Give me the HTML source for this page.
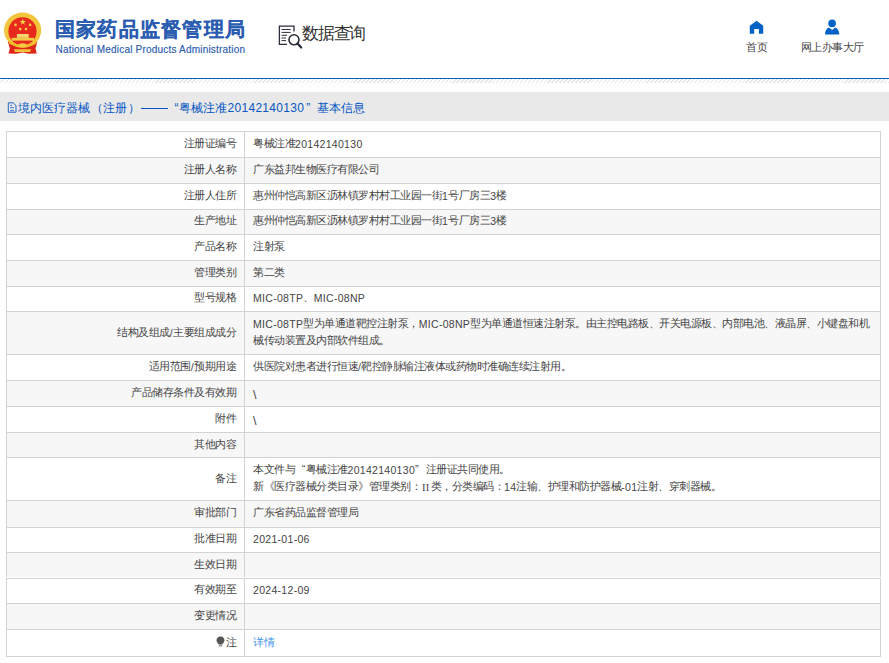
<!DOCTYPE html><html><head><meta charset="utf-8"><style>
*{margin:0;padding:0;box-sizing:border-box}
html,body{width:889px;height:663px;overflow:hidden;background:#fff;font-family:"Liberation Sans",sans-serif;color:#555}
.abs{position:absolute;white-space:nowrap}
#title{left:54.7px;top:14.5px;font-size:20px;font-weight:bold;color:#2a5cb0;line-height:28px;letter-spacing:1.3px;-webkit-text-stroke:0.12px #2a5cb0}
#en{left:55.5px;top:44.3px;font-size:10px;color:#2a5cb0;line-height:12px;letter-spacing:0.2px;-webkit-text-stroke:0.15px #2a5cb0}
#sq{left:302px;top:22px;font-size:17px;color:#333;line-height:24px;letter-spacing:-1.2px}
.nav{font-size:11px;color:#444;line-height:14px;letter-spacing:-0.5px}
#bline{left:0;top:78px;width:889px;height:1px;background:#0a5fc6}
#hatch{left:0;top:79px;width:889px;height:4px;background:repeating-linear-gradient(135deg,#fff 0,#fff 1.8px,#e4e4e4 1.8px,#e4e4e4 2.8px);background-position:2px 0}
#bar{left:0;top:92px;width:889px;height:29px;background:#e9e9e9}
.bt{top:100px;font-size:12px;color:#0656c4;line-height:16px}
.row{position:absolute;left:6px;width:875px;border:1px solid #d3d3d3;border-bottom:none}
.row.g{background:#f7f7f7}
.lab{position:absolute;left:0;width:238px;top:0;bottom:0;border-right:1px solid #d3d3d3;text-align:right;padding-right:8px;font-size:11px;letter-spacing:-0.5px;color:#444;display:flex;align-items:center;justify-content:flex-end}
.val{position:absolute;left:246px;top:0;bottom:0;font-size:11px;letter-spacing:-0.5px;color:#444;display:flex;align-items:center;line-height:17px}
.lab>div,.val>div{position:relative;top:-1px}
.l{font-size:10.5px;letter-spacing:0.3px;position:relative;top:1px}
.bs{position:relative;top:2px}.bs .l{font-size:12.5px}
.r2{display:inline-block;width:9.5px;font-family:'Liberation Serif',serif;font-size:11px;letter-spacing:-0.3px;text-align:center}
.val a{color:#3f92ea}
.q{display:inline-block;width:10.5px;letter-spacing:0}
</style></head><body>
<svg class="abs" style="left:0;top:0" width="50" height="60" viewBox="0 0 50 60">
<path d="M7.8 41.5 L37.4 41.5 L35.5 48.5 L36.7 53.5 L29 53.8 L22.6 52.5 L16 53.8 L8.5 53.5 L9.8 48.5 Z" fill="#e0261b"/>
<ellipse cx="22.65" cy="30.2" rx="18.6" ry="17.6" fill="#f3c53a"/>
<circle cx="22.5" cy="31.3" r="14.1" fill="#e8291d"/>
<polygon points="22.8,18.6 23.6,20.9 26,20.9 24.1,22.4 24.8,24.8 22.8,23.3 20.8,24.8 21.5,22.4 19.6,20.9 22,20.9" fill="#f6d34a"/>
<circle cx="15.5" cy="24.9" r="1.3" fill="#f3cc45"/><circle cx="30.1" cy="24.9" r="1.3" fill="#f3cc45"/>
<circle cx="20.2" cy="29.1" r="1.3" fill="#f3cc45"/><circle cx="26" cy="29.1" r="1.3" fill="#f3cc45"/>
<rect x="16.9" y="34" width="11.8" height="3.8" fill="#f6d870"/>
<rect x="11.7" y="37.8" width="22.3" height="2.8" fill="#f3cc45"/>
<path d="M8.5 40.5 Q22.6 49.5 36.7 40.5 L36.2 43.5 Q22.6 51 9 43.5 Z" fill="#f0bd2a"/>
<ellipse cx="22.6" cy="45.3" rx="4" ry="2" fill="#f3cc45"/>
<path d="M13.8 49.2 H31.2 L30 52 H15 Z" fill="#f3c53a"/>

</svg>
<div class="abs" id="title">国家药品监督管理局</div>
<div class="abs" id="en">National Medical Products Administration</div>
<svg class="abs" style="left:276px;top:22px" width="30" height="30" viewBox="276 22 30 30">
<path d="M294 31.5 V26.2 H279.4 V44.4 H287" fill="none" stroke="#2c2c3c" stroke-width="1.3"/>
<path d="M281.5 29.5 H290.7 M281.5 32.4 H290.7 M281.5 35.3 H287 M281.5 38 H286 M281.5 40.6 H286" stroke="#2c2c3c" stroke-width="1"/>
<circle cx="294" cy="39.8" r="5" fill="none" stroke="#2c2c3c" stroke-width="1.6"/>
<path d="M297.5 43.5 L301.2 47.5" stroke="#2c2c3c" stroke-width="2.2" stroke-linecap="round"/>
</svg>
<div class="abs" id="sq">数据查询</div>
<svg class="abs" style="left:740px;top:15px" width="30" height="25" viewBox="740 15 30 25">
<path d="M756.6 20.7 L763.2 25.7 V33.7 H758.9 V29 H754.2 V33.7 H749.8 V25.7 Z" fill="#0062c4"/></svg>
<div class="abs nav" style="left:746px;top:40px">首页</div>
<svg class="abs" style="left:815px;top:15px" width="30" height="25" viewBox="815 15 30 25">
<circle cx="832.1" cy="23.4" r="3.8" fill="#0062c4"/>
<path d="M825 34.4 Q825.5 28.5 829 27.6 L832.1 30 L835.2 27.6 Q838.8 28.5 839.3 34.4 Z" fill="#0062c4"/></svg>
<div class="abs nav" style="left:800.5px;top:40px">网上办事大厅</div>
<div class="abs" id="bline"></div><div class="abs" id="hatch"></div><div class="abs" id="bar"></div>
<div class="abs" style="left:141.2px;top:107.6px;width:26.5px;height:1.2px;background:#0656c4"></div>
<svg class="abs" style="left:5px;top:100px" width="14" height="15" viewBox="5 100 14 15">
<path d="M8.3 102.8 H13.2 L16 105.6 V112.2 H8.3 Z" fill="none" stroke="#1f63c6" stroke-width="1"/>
<path d="M10 105.4 H12 M10 107.7 H14 M10 110.4 H14" stroke="#2a6ad0" stroke-width="0.9"/></svg>
<div class="abs bt" style="left:18px">境内医疗器械</div>
<div class="abs bt" style="left:90.5px">（</div>
<div class="abs bt" style="left:102.5px">注册</div>
<div class="abs bt" style="left:128.2px">）</div>
<div class="abs bt" style="left:174.5px">“</div>
<div class="abs bt" style="left:179px">粤械注准</div>
<div class="abs bt" style="left:227.5px"><span style="letter-spacing:0.3px">20142140130</span></div>
<div class="abs bt" style="left:306.3px">”</div>
<div class="abs bt" style="left:316.5px">基本信息</div>
<div class="row" style="top:131px;height:26px"><div class="lab"><div>注册证编号</div></div><div class="val"><div>粤械注准<span class=l>20142140130</span></div></div></div>
<div class="row g" style="top:157px;height:26px"><div class="lab"><div>注册人名称</div></div><div class="val"><div>广东益邦生物医疗有限公司</div></div></div>
<div class="row" style="top:183px;height:25.5px"><div class="lab"><div>注册人住所</div></div><div class="val"><div>惠州仲恺高新区沥林镇罗村村工业园一街<span class=l>1</span>号厂房三<span class=l>3</span>楼</div></div></div>
<div class="row g" style="top:208.5px;height:25.5px"><div class="lab"><div>生产地址</div></div><div class="val"><div>惠州仲恺高新区沥林镇罗村村工业园一街<span class=l>1</span>号厂房三<span class=l>3</span>楼</div></div></div>
<div class="row" style="top:234px;height:26px"><div class="lab"><div>产品名称</div></div><div class="val"><div>注射泵</div></div></div>
<div class="row g" style="top:260px;height:25.5px"><div class="lab"><div>管理类别</div></div><div class="val"><div>第二类</div></div></div>
<div class="row" style="top:285.5px;height:25.5px"><div class="lab"><div>型号规格</div></div><div class="val"><div><span class=l>MIC-08TP</span>、<span class=l>MIC-08NP</span></div></div></div>
<div class="row g" style="top:311px;height:43.30000000000001px"><div class="lab"><div>结构及组成<span class=l>/</span>主要组成成分</div></div><div class="val"><div><span class=l>MIC-08TP</span>型为单通道靶控注射泵，<span class=l>MIC-08NP</span>型为单通道恒速注射泵。由主控电路板、开关电源板、内部电池、液晶屏、小键盘和机<br>械传动装置及内部软件组成。</div></div></div>
<div class="row" style="top:354.3px;height:25.69999999999999px"><div class="lab"><div>适用范围<span class=l>/</span>预期用途</div></div><div class="val"><div>供医院对患者进行恒速<span class=l>/</span>靶控静脉输注液体或药物时准确连续注射用。</div></div></div>
<div class="row g" style="top:380px;height:26px"><div class="lab"><div>产品储存条件及有效期</div></div><div class="val"><div><span class=bs><span class=l>\</span></span></div></div></div>
<div class="row" style="top:406px;height:26px"><div class="lab"><div>附件</div></div><div class="val"><div><span class=bs><span class=l>\</span></span></div></div></div>
<div class="row g" style="top:432px;height:25px"><div class="lab"><div>其他内容</div></div><div class="val"><div></div></div></div>
<div class="row" style="top:457px;height:43.30000000000001px"><div class="lab"><div>备注</div></div><div class="val"><div>本文件与<span class=q style=text-align:right>“</span>粤械注准<span class=l>20142140130</span><span class=q>”</span>注册证共同使用。<br>新《医疗器械分类目录》管理类别：<span class=r2><span class=l>II</span></span>类，分类编码：<span class=l>14</span>注输、护理和防护器械<span class=l>-01</span>注射、穿刺器械。</div></div></div>
<div class="row g" style="top:500.3px;height:26.30000000000001px"><div class="lab"><div>审批部门</div></div><div class="val"><div>广东省药品监督管理局</div></div></div>
<div class="row" style="top:526.6px;height:25.799999999999955px"><div class="lab"><div>批准日期</div></div><div class="val"><div><span class=l>2021-01-06</span></div></div></div>
<div class="row g" style="top:552.4px;height:25.100000000000023px"><div class="lab"><div>生效日期</div></div><div class="val"><div></div></div></div>
<div class="row" style="top:577.5px;height:25.5px"><div class="lab"><div>有效期至</div></div><div class="val"><div><span class=l>2024-12-09</span></div></div></div>
<div class="row g" style="top:603px;height:26px"><div class="lab"><div>变更情况</div></div><div class="val"><div></div></div></div>
<div class="row" style="top:629px;height:27px"><div class="lab"><div><svg width="9" height="11" viewBox="0 0 9 11" style="margin-right:1px;position:relative;top:1.5px"><path d="M4.5 0.5 C1.8 0.5 0.5 2.5 0.5 4.3 C0.5 6.3 2.2 7.2 2.6 8.6 H6.4 C6.8 7.2 8.5 6.3 8.5 4.3 C8.5 2.5 7.2 0.5 4.5 0.5 Z" fill="#555"/><rect x="2.8" y="9" width="3.4" height="1.6" fill="#999"/></svg>注</div></div><div class="val"><div><a>详情</a></div></div></div>
<div class="abs" style="left:6px;top:656px;width:875px;height:1px;background:#d3d3d3"></div>
</body></html>
